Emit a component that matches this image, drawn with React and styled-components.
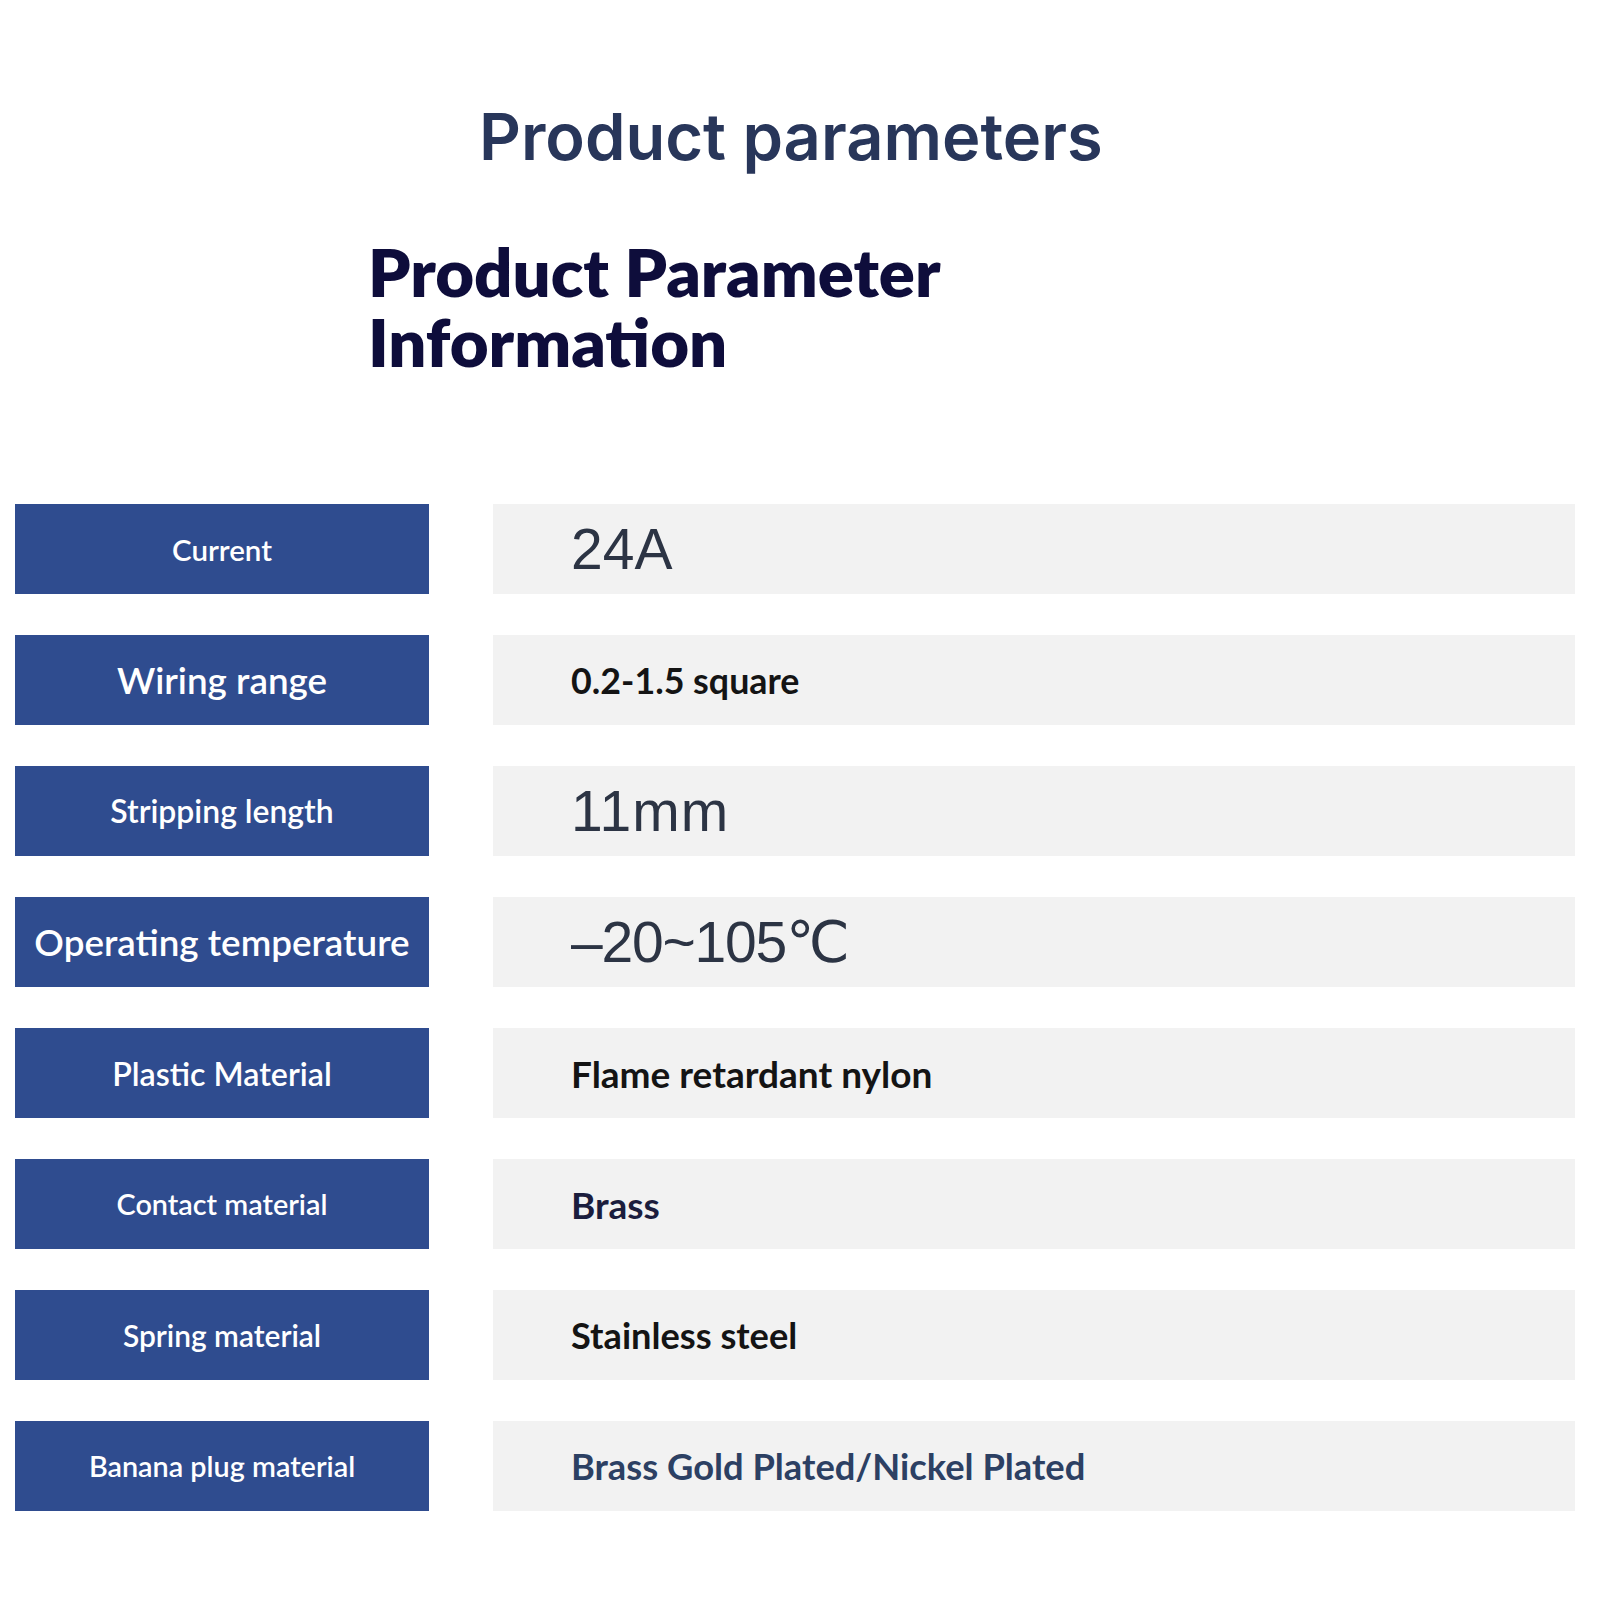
import styled, { createGlobalStyle } from "styled-components";

const GlobalStyle = createGlobalStyle`
  html, body {
    margin: 0;
    padding: 0;
    background: #ffffff;
  }
  * {
    box-sizing: border-box;
  }
`;

const params = [
  { label: "Current", labelSize: 29.5, value: "24A", kind: "plain" },
  { label: "Wiring range", labelSize: 36.8, value: "0.2-1.5 square", kind: "bold", size: 35.8, color: "#141414" },
  { label: "Stripping length", labelSize: 31.9, value: "11mm", kind: "plain", spacing: 1 },
  { label: "Operating temperature", labelSize: 36.8, value: "–20~105℃", kind: "plain", spacing: -1.2 },
  { label: "Plastic Material", labelSize: 32.2, value: "Flame retardant nylon", kind: "bold", size: 37, color: "#141414" },
  { label: "Contact material", labelSize: 28.8, value: "Brass", kind: "bold", size: 37, color: "#1b1d3d" },
  { label: "Spring material", labelSize: 29.9, value: "Stainless steel", kind: "bold", size: 36.2, color: "#141414" },
  { label: "Banana plug material", labelSize: 28.8, value: "Brass Gold Plated/Nickel Plated", kind: "bold", size: 36.3, color: "#2c4063" },
];

function App() {
  return (
    <Page>
      <GlobalStyle />
      <Header>
        <Title>Product parameters</Title>
        <SubTitle>
          <SubLine>Product Parameter</SubLine>
          <SubLine>Information</SubLine>
        </SubTitle>
      </Header>

      <Table>
        {params.map((p) => (
          <Row key={p.label}>
            <Label $size={p.labelSize}>{p.label}</Label>
            <ValueCell>
              {p.kind === "plain" ? (
                <PlainValue $spacing={p.spacing || 0}>{p.value}</PlainValue>
              ) : (
                <BoldValue $size={p.size} $color={p.color}>
                  {p.value}
                </BoldValue>
              )}
            </ValueCell>
          </Row>
        ))}
      </Table>
    </Page>
  );
}

export default App;

// ---- styled-components ----
const Page = styled.div`
  width: 1600px;
  min-height: 1600px;
  background: #fff;
  padding-top: 101px;
`;

const Header = styled.div`
  display: flex;
  flex-direction: column;
`;

const Title = styled.h1`
  margin: 0;
  padding-left: 479px;
  font-family: Inter, "Open Sans", sans-serif;
  font-weight: 600;
  font-size: 65px;
  line-height: 72px;
  color: #28365a;
`;

const SubTitle = styled.h2`
  margin: 63px 0 0 0;
  padding-left: 368px;
  display: flex;
  flex-direction: column;
  font-family: Lato, "Liberation Sans", sans-serif;
  font-weight: 800;
  font-size: 67px;
  line-height: 70px;
  color: #0e0d3b;
`;

const SubLine = styled.span`
  display: block;
  height: 70px;
`;

const Table = styled.div`
  margin-top: 128px;
  display: flex;
  flex-direction: column;
  gap: 41px;
`;

const Row = styled.div`
  display: flex;
  gap: 64px;
  padding-left: 15px;
  height: 90px;
`;

const Label = styled.div`
  width: 414px;
  flex-shrink: 0;
  background: #2f4c8f;
  color: #ffffff;
  display: flex;
  align-items: center;
  justify-content: center;
  font-family: Lato, "Liberation Sans", sans-serif;
  font-weight: 600;
  font-size: ${(p) => p.$size}px;
`;

const ValueCell = styled.div`
  width: 1082px;
  background: #f2f2f2;
  display: flex;
  align-items: center;
  padding-left: 78px;
`;

const PlainValue = styled.span`
  font-family: "Liberation Sans", "DejaVu Sans", sans-serif;
  font-size: 57px;
  font-weight: 400;
  color: #2c3444;
  letter-spacing: ${(p) => p.$spacing}px;
`;

const BoldValue = styled.span`
  font-family: Lato, "Liberation Sans", sans-serif;
  font-weight: 700;
  font-size: ${(p) => p.$size}px;
  color: ${(p) => p.$color};
`;
